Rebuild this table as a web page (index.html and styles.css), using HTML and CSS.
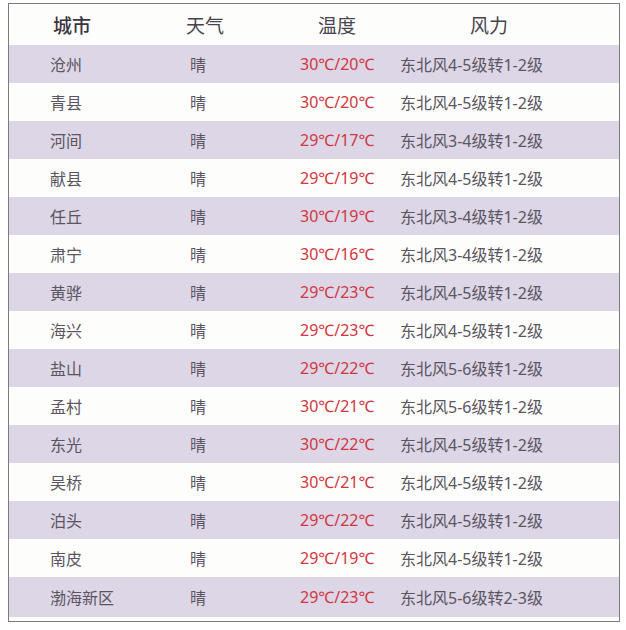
FILE: index.html
```html
<!DOCTYPE html>
<html lang="zh">
<head>
<meta charset="utf-8">
<link rel="stylesheet" href="styles.css">
</head>
<body>
<div class="frame">
  <div class="head">
    <span class="strong">城市</span><span>天气</span><span>温度</span><span>风力</span>
  </div>
  <div class="row odd"><span>沧州</span><span>晴</span><span class="t">30℃/20℃</span><span>东北风4-5级转1-2级</span></div>
  <div class="row"><span>青县</span><span>晴</span><span class="t">30℃/20℃</span><span>东北风4-5级转1-2级</span></div>
  <div class="row odd"><span>河间</span><span>晴</span><span class="t">29℃/17℃</span><span>东北风3-4级转1-2级</span></div>
  <div class="row"><span>献县</span><span>晴</span><span class="t">29℃/19℃</span><span>东北风4-5级转1-2级</span></div>
  <div class="row odd"><span>任丘</span><span>晴</span><span class="t">30℃/19℃</span><span>东北风3-4级转1-2级</span></div>
  <div class="row"><span>肃宁</span><span>晴</span><span class="t">30℃/16℃</span><span>东北风3-4级转1-2级</span></div>
  <div class="row odd"><span>黄骅</span><span>晴</span><span class="t">29℃/23℃</span><span>东北风4-5级转1-2级</span></div>
  <div class="row"><span>海兴</span><span>晴</span><span class="t">29℃/23℃</span><span>东北风4-5级转1-2级</span></div>
  <div class="row odd"><span>盐山</span><span>晴</span><span class="t">29℃/22℃</span><span>东北风5-6级转1-2级</span></div>
  <div class="row"><span>孟村</span><span>晴</span><span class="t">30℃/21℃</span><span>东北风5-6级转1-2级</span></div>
  <div class="row odd"><span>东光</span><span>晴</span><span class="t">30℃/22℃</span><span>东北风4-5级转1-2级</span></div>
  <div class="row"><span>吴桥</span><span>晴</span><span class="t">30℃/21℃</span><span>东北风4-5级转1-2级</span></div>
  <div class="row odd"><span>泊头</span><span>晴</span><span class="t">29℃/22℃</span><span>东北风4-5级转1-2级</span></div>
  <div class="row"><span>南皮</span><span>晴</span><span class="t">29℃/19℃</span><span>东北风4-5级转1-2级</span></div>
  <div class="row odd last"><span>渤海新区</span><span>晴</span><span class="t">29℃/23℃</span><span>东北风5-6级转2-3级</span></div>
</div>
</body>
</html>
```

FILE: styles.css
```css
html, body {
  margin: 0;
  padding: 0;
  background: #ffffff;
}
body {
  font-family: "Noto Sans", "Noto Sans CJK SC", sans-serif;
  color: #5a5560;
}
.frame {
  margin: 3px 0 0 8px;
  width: 610px;
  border: 1px solid #7c7c7c;
  padding-bottom: 4px;
  background: #fdfdfc;
}
.head {
  display: grid;
  grid-template-columns: 44px 133px 132px 152px 1fr;
  height: 41px;
  align-items: center;
  font-size: 19px;
  font-weight: 400;
  color: #48444c;
}
.head span:first-child { grid-column: 2; }
.head .strong {
  font-weight: 500;
  color: #3a3540;
}
.row {
  display: grid;
  grid-template-columns: 41px 140px 110px 100px 1fr;
  height: 38px;
  align-items: center;
  font-size: 16px;
}
.row span:first-child { grid-column: 2; }
.row.odd { background: #dcd6e7; }
.row.last { height: 40px; }
.t { color: #d2363e; }
```
